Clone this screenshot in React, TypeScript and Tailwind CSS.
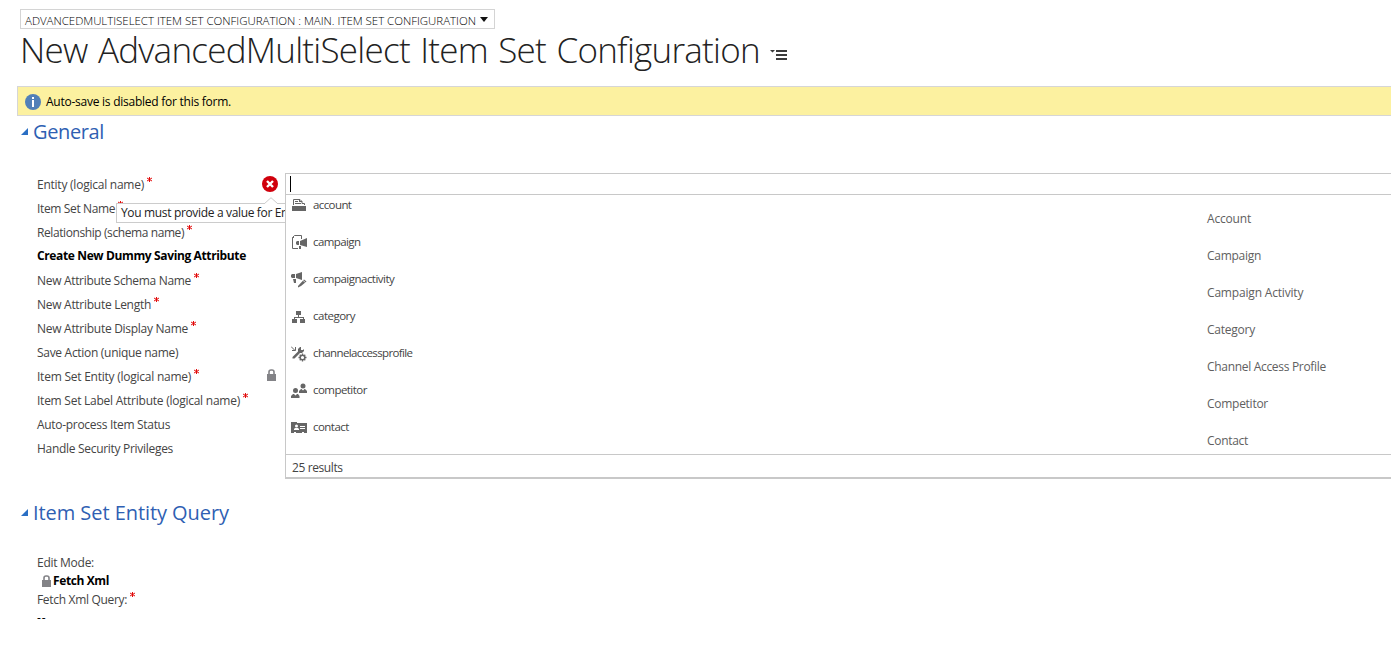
import type { ReactNode } from "react";

type Field = { label: string; spacing: string; required?: boolean; header?: boolean; status?: "error" | "locked" };

const fields: Field[] = [
  { label: "Entity (logical name)", spacing: "tracking-[-0.24px]", required: true, status: "error" },
  { label: "Item Set Name", spacing: "tracking-[-0.36px]", required: true },
  { label: "Relationship (schema name)", spacing: "tracking-[-0.41px]", required: true },
  { label: "Create New Dummy Saving Attribute", spacing: "tracking-[-0.37px]", header: true },
  { label: "New Attribute Schema Name", spacing: "tracking-[-0.32px]", required: true },
  { label: "New Attribute Length", spacing: "tracking-[-0.28px]", required: true },
  { label: "New Attribute Display Name", spacing: "tracking-[-0.28px]", required: true },
  { label: "Save Action (unique name)", spacing: "tracking-[-0.3px]" },
  { label: "Item Set Entity (logical name)", spacing: "tracking-[-0.24px]", required: true, status: "locked" },
  { label: "Item Set Label Attribute (logical name)", spacing: "tracking-[-0.25px]", required: true },
  { label: "Auto-process Item Status", spacing: "tracking-[-0.3px]" },
  { label: "Handle Security Privileges", spacing: "tracking-[-0.3px]" },
];

const Icon = ({ children }: { children: ReactNode }) => (
  <svg width="16" height="16" viewBox="0 0 16 16" fill="#666" className="mt-0.5 shrink-0">{children}</svg>
);

const AccountIcon = () => (
  <Icon>
    <path d="M1 8h14v5H1z" />
    <path d="M2.500 7V1.500h6.500l2 2V5.500h2.500v1.500" fill="none" stroke="#666" />
    <path d="M4 3h3v1H4zM4 5h6v1H4zM8 1h1v2h2v1H8z" />
  </Icon>
);
const CampaignIcon = () => (
  <Icon>
    <path d="M10.500 4V.5H3.500L1.500 2.500V13.500H7" fill="none" stroke="#666" />
    <path d="M1 3h2V1zM5 7l1-1h2v4H6L5 9zM9 6l7-3v9l-7-2zM8 11h2v3H8z" />
  </Icon>
);
const ActivityIcon = () => (
  <Icon>
    <path d="M0 3l1-1h3v4H1L0 5zM5 2L11 0v8L5 6zM2 7h3v4H3zM7 14L13 7.500l2.500 2L10 14l-3 1.500z" />
    <path d="M12 8.500l2.500 2" stroke="#fff" strokeWidth=".7" />
  </Icon>
);
const CategoryIcon = () => (
  <Icon>
    <path d="M5 2h5v4H5zM7 6h1v2H7zM3 8h10v1H3zM3 8h1v3H3zM7 8h1v1H7zM12 8h1v3h-1zM1 10h5v4H1zM9 10h5v4H9z" />
  </Icon>
);
const ChannelIcon = () => (
  <Icon>
    <path d="M0 .5l4 4M1 4.500h3.500V1" fill="none" stroke="#666" />
    <path d="M1.500 11L7 5.500V3l2-2h1v3h2l1-1v2l-2 2H9l-5.500 5.500h-2z" />
    <circle cx="11.500" cy="11.500" r="2.300" fill="none" stroke="#666" strokeWidth="1.500" />
    <path d="M11.500 7.500v2M11.500 13.500v2M7.500 11.500h2M13.500 11.500h2M8.700 8.700L10 10M13 13l1.300 1.300M14.300 8.700L13 10M10 13l-1.300 1.300" stroke="#666" strokeWidth="1.300" />
  </Icon>
);
const CompetitorIcon = () => (
  <Icon>
    <circle cx="4.500" cy="7.500" r="2.500" />
    <path d="M0 15v-2l2-2h1l1.500 1.500L6 11h1l1.500 2v2z" />
    <circle cx="12" cy="3" r="2.500" />
    <path d="M8 10V8l2-2h.500L12 7.500 13.500 6h.500l2 2v2z" />
  </Icon>
);
const ContactIcon = () => (
  <Icon>
    <path fillRule="evenodd" d="M0 2h6v1h10v10h-3v-1h-2v1H5v-1H3v1H0zM3 9v1h5V9L7 8H4zM9 6h5v1H9zM9 8h5v1H9z" />
    <circle cx="5.500" cy="6" r="1.500" fill="#fff" />
  </Icon>
);

const entities = [
  { name: "account", title: "Account", icon: <AccountIcon />, spacing: "tracking-[-0.6px]", titleSpacing: "tracking-[-0.19px]" },
  { name: "campaign", title: "Campaign", icon: <CampaignIcon />, spacing: "tracking-[-0.6px]", titleSpacing: "tracking-[-0.28px]" },
  { name: "campaignactivity", title: "Campaign Activity", icon: <ActivityIcon />, spacing: "tracking-[-0.52px]", titleSpacing: "tracking-[-0.18px]" },
  { name: "category", title: "Category", icon: <CategoryIcon />, spacing: "tracking-[-0.5px]", titleSpacing: "tracking-[-0.24px]" },
  { name: "channelaccessprofile", title: "Channel Access Profile", icon: <ChannelIcon />, spacing: "tracking-[-0.63px]", titleSpacing: "tracking-[-0.31px]" },
  { name: "competitor", title: "Competitor", icon: <CompetitorIcon />, spacing: "tracking-[-0.55px]", titleSpacing: "tracking-[-0.27px]" },
  { name: "contact", title: "Contact", icon: <ContactIcon />, spacing: "tracking-[-0.55px]", titleSpacing: "tracking-[-0.3px]" },
];

const Lock = () => (
  <svg width="9" height="12" viewBox="0 0 9 12" className="shrink-0">
    <path d="M0 5h9v7H0z" fill="#838387" />
    <path d="M2 5.500V3a2 2 0 0 1 2-2h1a2 2 0 0 1 2 2v2.500" fill="none" stroke="#838387" strokeWidth="1.600" />
  </svg>
);

const Star = () => (
  <svg width="5" height="5" viewBox="0 0 5 5" className="mb-3 ml-[3px] shrink-0">
    <path d="M2.500 0v5M0 1l5 3M5 1L0 4" stroke="#e00000" strokeWidth=".95" />
  </svg>
);

function SectionTitle({ children, spacing }: { children: ReactNode; spacing: string }) {
  return (
    <h2 className={`ml-[21px] flex h-8 items-center text-[20px] text-[#2f5fb3] ${spacing}`}>
      <svg width="7" height="7" viewBox="0 0 7 7" className="mr-[5px] mb-0.5 shrink-0"><path d="M7 0v7H0z" fill="#2a6fc4" /></svg>
      {children}
    </h2>
  );
}

function Tooltip() {
  return (
    <div className="absolute top-[30px] left-[79px] z-10 h-5 w-[240px] border border-[#ccc] bg-white pl-1 text-[12px] leading-[18px] tracking-[-0.34px] whitespace-nowrap text-[#222]">
      You must provide a value for Entity
      <svg width="14" height="7" viewBox="0 0 14 7" className="absolute -top-[7px] left-[147px]">
        <path d="M0 7L7 .7 14 7" fill="#fff" stroke="#ccc" />
      </svg>
    </div>
  );
}

export default function App() {
  return (
    <main className="h-[663px] w-full overflow-hidden bg-white font-['Open_Sans',sans-serif] text-[12px] text-[#444]">
      <header className="flex h-[86px] flex-col items-start pt-[9px] pl-5">
        <button className="flex h-5 w-[475px] items-center border border-[#d4d4d4] pt-[3px] pl-1 text-[11.5px] leading-4 font-light tracking-[-0.03px] whitespace-nowrap text-black">
          ADVANCEDMULTISELECT ITEM SET CONFIGURATION : MAIN. ITEM SET CONFIGURATION
          <svg width="8" height="5" viewBox="0 0 8 5" className="mb-[3px] ml-1 shrink-0"><path d="M0 0h8L4 5z" fill="#111" /></svg>
        </button>
        <div className="flex h-[42px] items-center">
          <h1 className="w-[750px] text-[35px] leading-[42px] font-light tracking-[-0.74px] whitespace-nowrap text-[#222] [word-spacing:2px]">
            New AdvancedMultiSelect Item Set Configuration
          </h1>
          <svg width="17" height="10" viewBox="0 0 17 10" className="mt-2.5">
            <path d="M0 0h5L2.500 2.500zM6 0h11v2H6zM6 4h11v2H6zM6 8h11v2H6z" fill="#3b3b3b" />
          </svg>
        </div>
      </header>

      <div className="ml-[17px] flex h-[30px] items-center border-y border-l border-[#d6d6d6] bg-[#fcf1a0] pl-[7px] tracking-[-0.25px] text-black">
        <svg width="16" height="16" viewBox="0 0 16 16" className="mt-0.5 mr-[5px]">
          <circle cx="8" cy="8" r="8" fill="#5180b8" />
          <path d="M7 3h2v2H7zM7 6h2v7H7z" fill="#fff" />
        </svg>
        <span className="pt-0.5">Auto-save is disabled for this form.</span>
      </div>

      <SectionTitle spacing="tracking-[-0.37px]">General</SectionTitle>

      <section className="mt-[25px] flex h-[306px]">
        <div className="relative w-[285px] shrink-0 overflow-hidden pl-[37px]">
          {fields.map((f) => (
            <div key={f.label} className="relative flex h-6 items-center whitespace-nowrap">
              <span className={f.header ? `mb-0.5 font-bold text-black ${f.spacing}` : f.spacing}>{f.label}</span>
              {f.required && <Star />}
              {f.status === "error" && (
                <svg width="16" height="16" viewBox="0 0 16 16" className="mr-[7px] mb-0.5 ml-auto">
                  <circle cx="8" cy="8" r="8" fill="#d0000c" />
                  <path d="M5 5l6 6M11 5l-6 6" stroke="#fff" strokeWidth="2.400" />
                </svg>
              )}
              {f.status === "locked" && <div className="mr-[9px] mb-1 ml-auto"><Lock /></div>}
              {f.status === "error" && <Tooltip />}
            </div>
          ))}
        </div>

        <div className="flex h-[306px] grow flex-col border-b-2 border-l border-[#c8c8c8] bg-white">
          <div className="flex h-[22px] shrink-0 items-center border-y border-[#c8c8c8] pl-1">
            <span className="h-4 w-px bg-black" />
          </div>
          <ul className="h-[259px] overflow-hidden">
            {entities.map((e) => (
              <li key={e.name} className="flex h-[37px] items-start pl-[5px]">
                <div className="flex w-[916px] items-start gap-1.5 pt-px text-[11.5px] leading-[17px]">
                  {e.icon}
                  <span className={e.spacing}>{e.name}</span>
                </div>
                <span className={`pt-4 leading-4 text-[#606060] ${e.titleSpacing}`}>{e.title}</span>
              </li>
            ))}
          </ul>
          <div className="flex grow items-center border-t border-[#c8c8c8] pt-1 pl-1.5 tracking-[-0.4px]">25 results</div>
        </div>
      </section>

      <div className="pt-[18px]"><SectionTitle spacing="tracking-[-0.06px]">Item Set Entity Query</SectionTitle></div>

      <section className="mt-[25px] ml-[37px]">
        <div className="flex h-[18px] items-center tracking-[-0.27px]">Edit Mode:</div>
        <div className="flex h-[18px] items-center gap-[2px] pl-[5px] font-bold tracking-[-0.39px] text-black"><Lock />Fetch Xml</div>
        <div className="flex h-5 items-center tracking-[-0.32px]">Fetch Xml Query:<Star /></div>
        <div className="flex h-4 items-center tracking-[1px] text-black">--</div>
      </section>
    </main>
  );
}
